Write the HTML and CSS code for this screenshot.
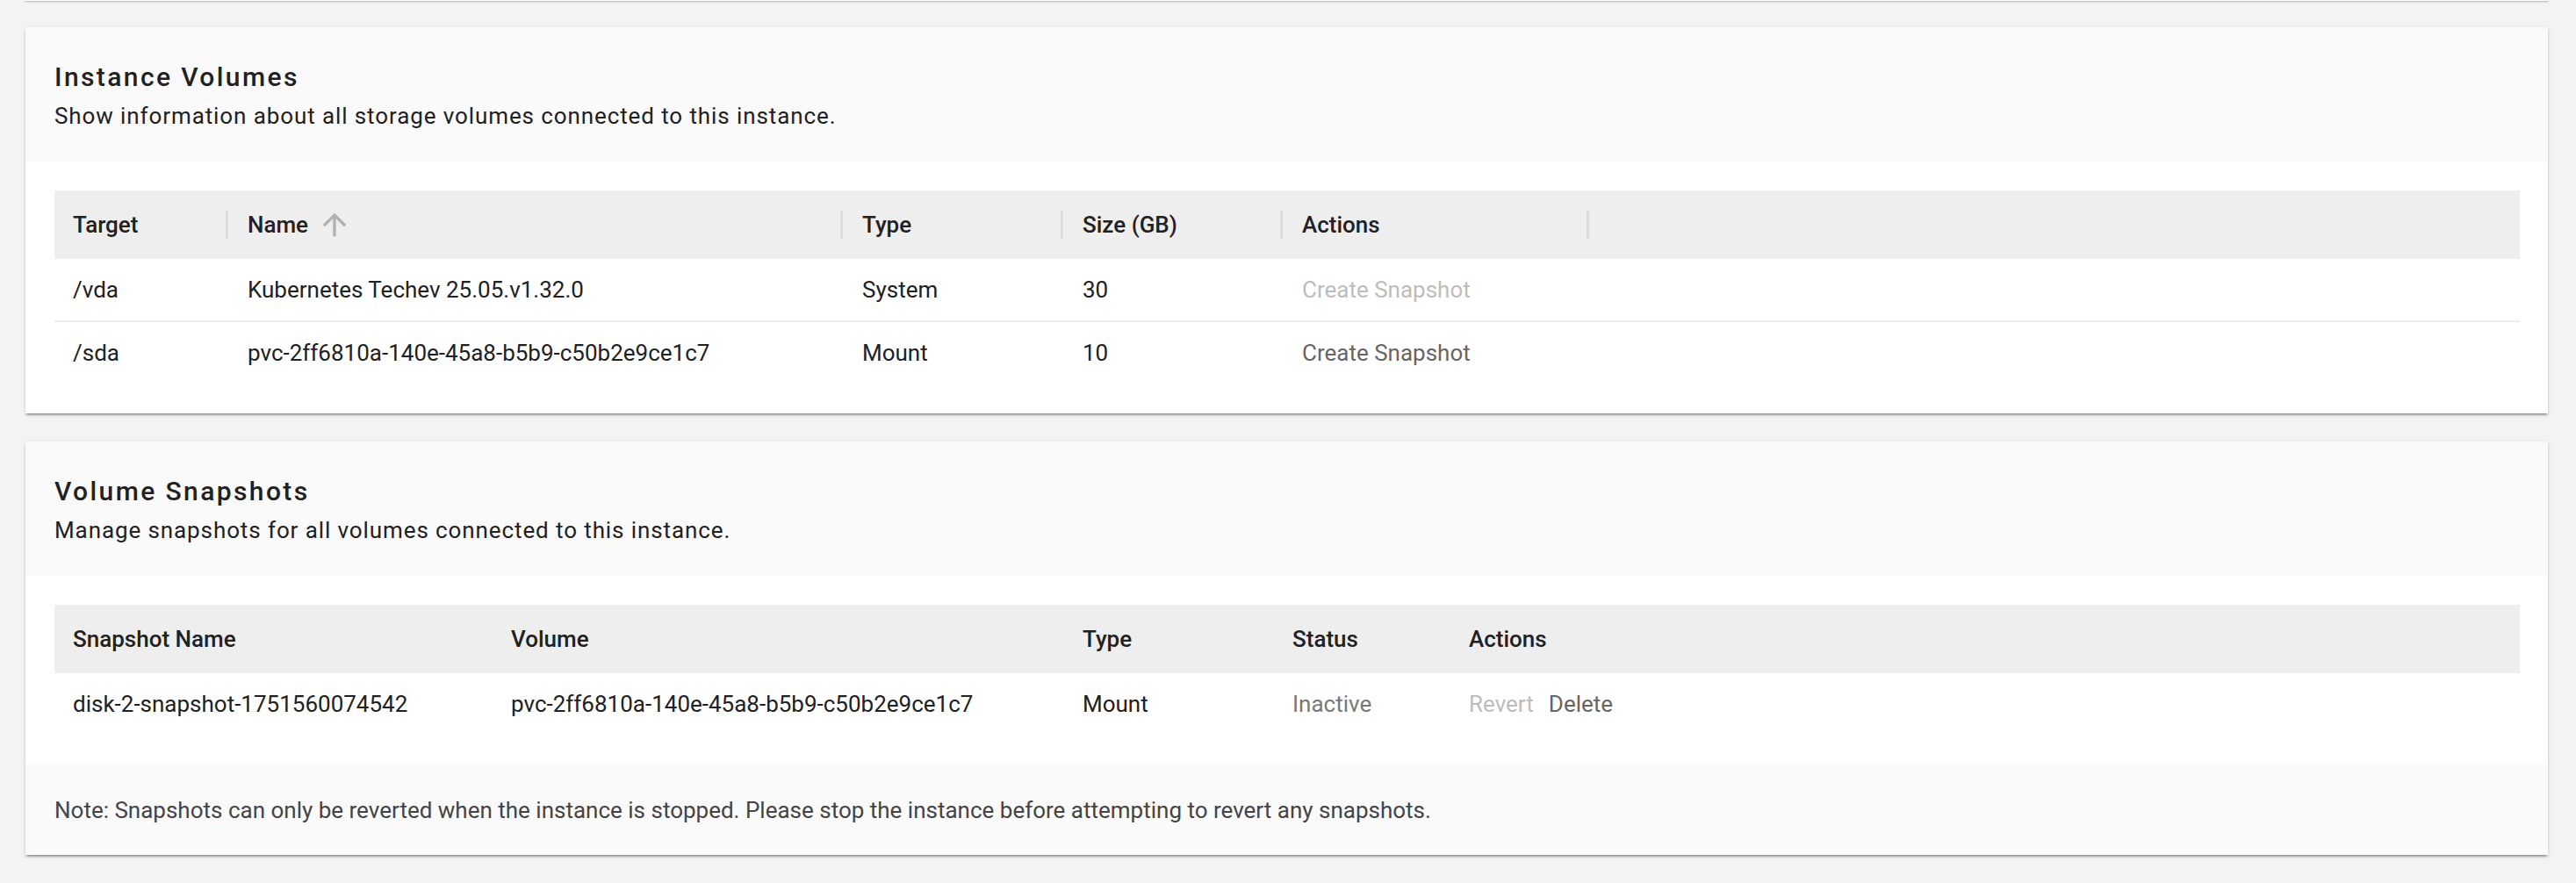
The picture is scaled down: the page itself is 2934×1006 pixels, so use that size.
FILE: index.html
```html
<!DOCTYPE html>
<html lang="en">
<head>
<meta charset="utf-8">
<title>Instance Volumes</title>
<link rel="stylesheet" href="styles.css">
</head>
<body>
<div class="page">
  <div class="card-tail"></div>

  <section class="card">
    <header class="card-head">
      <h2 class="title">Instance Volumes</h2>
      <p class="subtitle">Show information about all storage volumes connected to this instance.</p>
    </header>
    <div class="card-body">
      <div class="grid grid-volumes">
        <div class="hcell first">Target</div>
        <div class="hcell"><span class="sep"></span>Name<svg class="sort" viewBox="0 0 24 24"><path d="M4 12l1.41 1.41L11 7.83V20h2V7.83l5.58 5.59L20 12l-8-8-8 8z"/></svg></div>
        <div class="hcell"><span class="sep"></span>Type</div>
        <div class="hcell"><span class="sep"></span>Size (GB)</div>
        <div class="hcell"><span class="sep"></span>Actions</div>
        <div class="hcell"><span class="sep"></span></div>

        <div class="cell first">/vda</div>
        <div class="cell">Kubernetes Techev 25.05.v1.32.0</div>
        <div class="cell">System</div>
        <div class="cell">30</div>
        <div class="cell"><span class="action disabled">Create Snapshot</span></div>
        <div class="cell"></div>

        <div class="cell first last">/sda</div>
        <div class="cell last">pvc-2ff6810a-140e-45a8-b5b9-c50b2e9ce1c7</div>
        <div class="cell last">Mount</div>
        <div class="cell last">10</div>
        <div class="cell last"><span class="action">Create Snapshot</span></div>
        <div class="cell last"></div>
      </div>
    </div>
  </section>

  <section class="card">
    <header class="card-head">
      <h2 class="title">Volume Snapshots</h2>
      <p class="subtitle">Manage snapshots for all volumes connected to this instance.</p>
    </header>
    <div class="card-body">
      <div class="grid grid-snapshots">
        <div class="hcell plain">Snapshot Name</div>
        <div class="hcell plain">Volume</div>
        <div class="hcell plain">Type</div>
        <div class="hcell plain">Status</div>
        <div class="hcell plain">Actions</div>
        <div class="hcell plain"></div>

        <div class="cell plain last">disk-2-snapshot-1751560074542</div>
        <div class="cell plain last">pvc-2ff6810a-140e-45a8-b5b9-c50b2e9ce1c7</div>
        <div class="cell plain last">Mount</div>
        <div class="cell plain last status">Inactive</div>
        <div class="cell plain last actions"><span class="action disabled">Revert</span><span class="action">Delete</span></div>
        <div class="cell plain last"></div>
      </div>
    </div>
    <footer class="card-foot">
      <p class="note">Note: Snapshots can only be reverted when the instance is stopped. Please stop the instance before attempting to revert any snapshots.</p>
    </footer>
  </section>
</div>
</body>
</html>
```

FILE: styles.css
```css
* {
  box-sizing: border-box;
}

html, body {
  margin: 0;
  padding: 0;
  background: #f2f3f2;
  font-family: Roboto, "Noto Sans", "Liberation Sans", sans-serif;
  color: #212121;
}

.page {
  padding: 0 32px 32px 29px;
  display: flex;
  flex-direction: column;
  gap: 32px;
}

.card-tail {
  height: 1px;
  margin-bottom: -2px;
  background: #ffffff;
  box-shadow: 0 1px 2px rgba(60, 70, 70, 0.55);
}

.card {
  background: #ffffff;
  box-shadow: 0 3px 2px -2px rgba(0, 0, 0, 0.3),
              0 2px 2px 0 rgba(0, 0, 0, 0.16),
              0 2px 5px 0 rgba(0, 0, 0, 0.1);
}

.card-head {
  background: #fafafa;
  padding: 34px 33px 34px 33px;
}

.title {
  margin: 0;
  font-size: 30px;
  line-height: 46px;
  font-weight: 500;
  letter-spacing: 2.4px;
  color: #212121;
}

.subtitle {
  margin: 3px 0 0 0;
  font-size: 26px;
  line-height: 36px;
  font-weight: 400;
  letter-spacing: 0.9px;
  color: #212121;
}

.card-body {
  padding: 33px 32px 34px 33px;
}

.grid {
  display: grid;
  font-size: 26px;
}

.grid-volumes {
  grid-template-columns: 195px 700px 251px 250px 349px 1fr;
}

.grid-snapshots {
  grid-template-columns: 499px 651px 239px 201px 300px 1fr;
}

.hcell {
  height: 78px;
  background: #eeeeee;
  display: flex;
  align-items: center;
  font-weight: 500;
  color: #212121;
  white-space: nowrap;
}

.hcell.first,
.hcell.plain {
  padding-left: 21px;
}

.sep {
  width: 3px;
  height: 32px;
  background: #dcdcdc;
  margin-right: 22px;
  flex: none;
}

.sort {
  width: 40px;
  height: 40px;
  margin-left: 10px;
  fill: #b0b0b0;
  flex: none;
}

.cell {
  height: 72px;
  border-bottom: 2px solid #eeeeee;
  display: flex;
  align-items: center;
  padding-left: 25px;
  white-space: nowrap;
  color: #212121;
}

.cell.first,
.cell.plain {
  padding-left: 21px;
}

.cell.last {
  height: 70px;
  border-bottom: none;
}

.status {
  color: #787878;
}

.actions {
  gap: 17px;
}

.action {
  color: #666666;
}

.action.disabled {
  color: #bdbdbd;
}

.card-foot {
  background: #fafafa;
  padding: 34px 33px 33px 33px;
}

.note {
  margin: 0;
  font-size: 26px;
  line-height: 36px;
  color: #444444;
}
```
